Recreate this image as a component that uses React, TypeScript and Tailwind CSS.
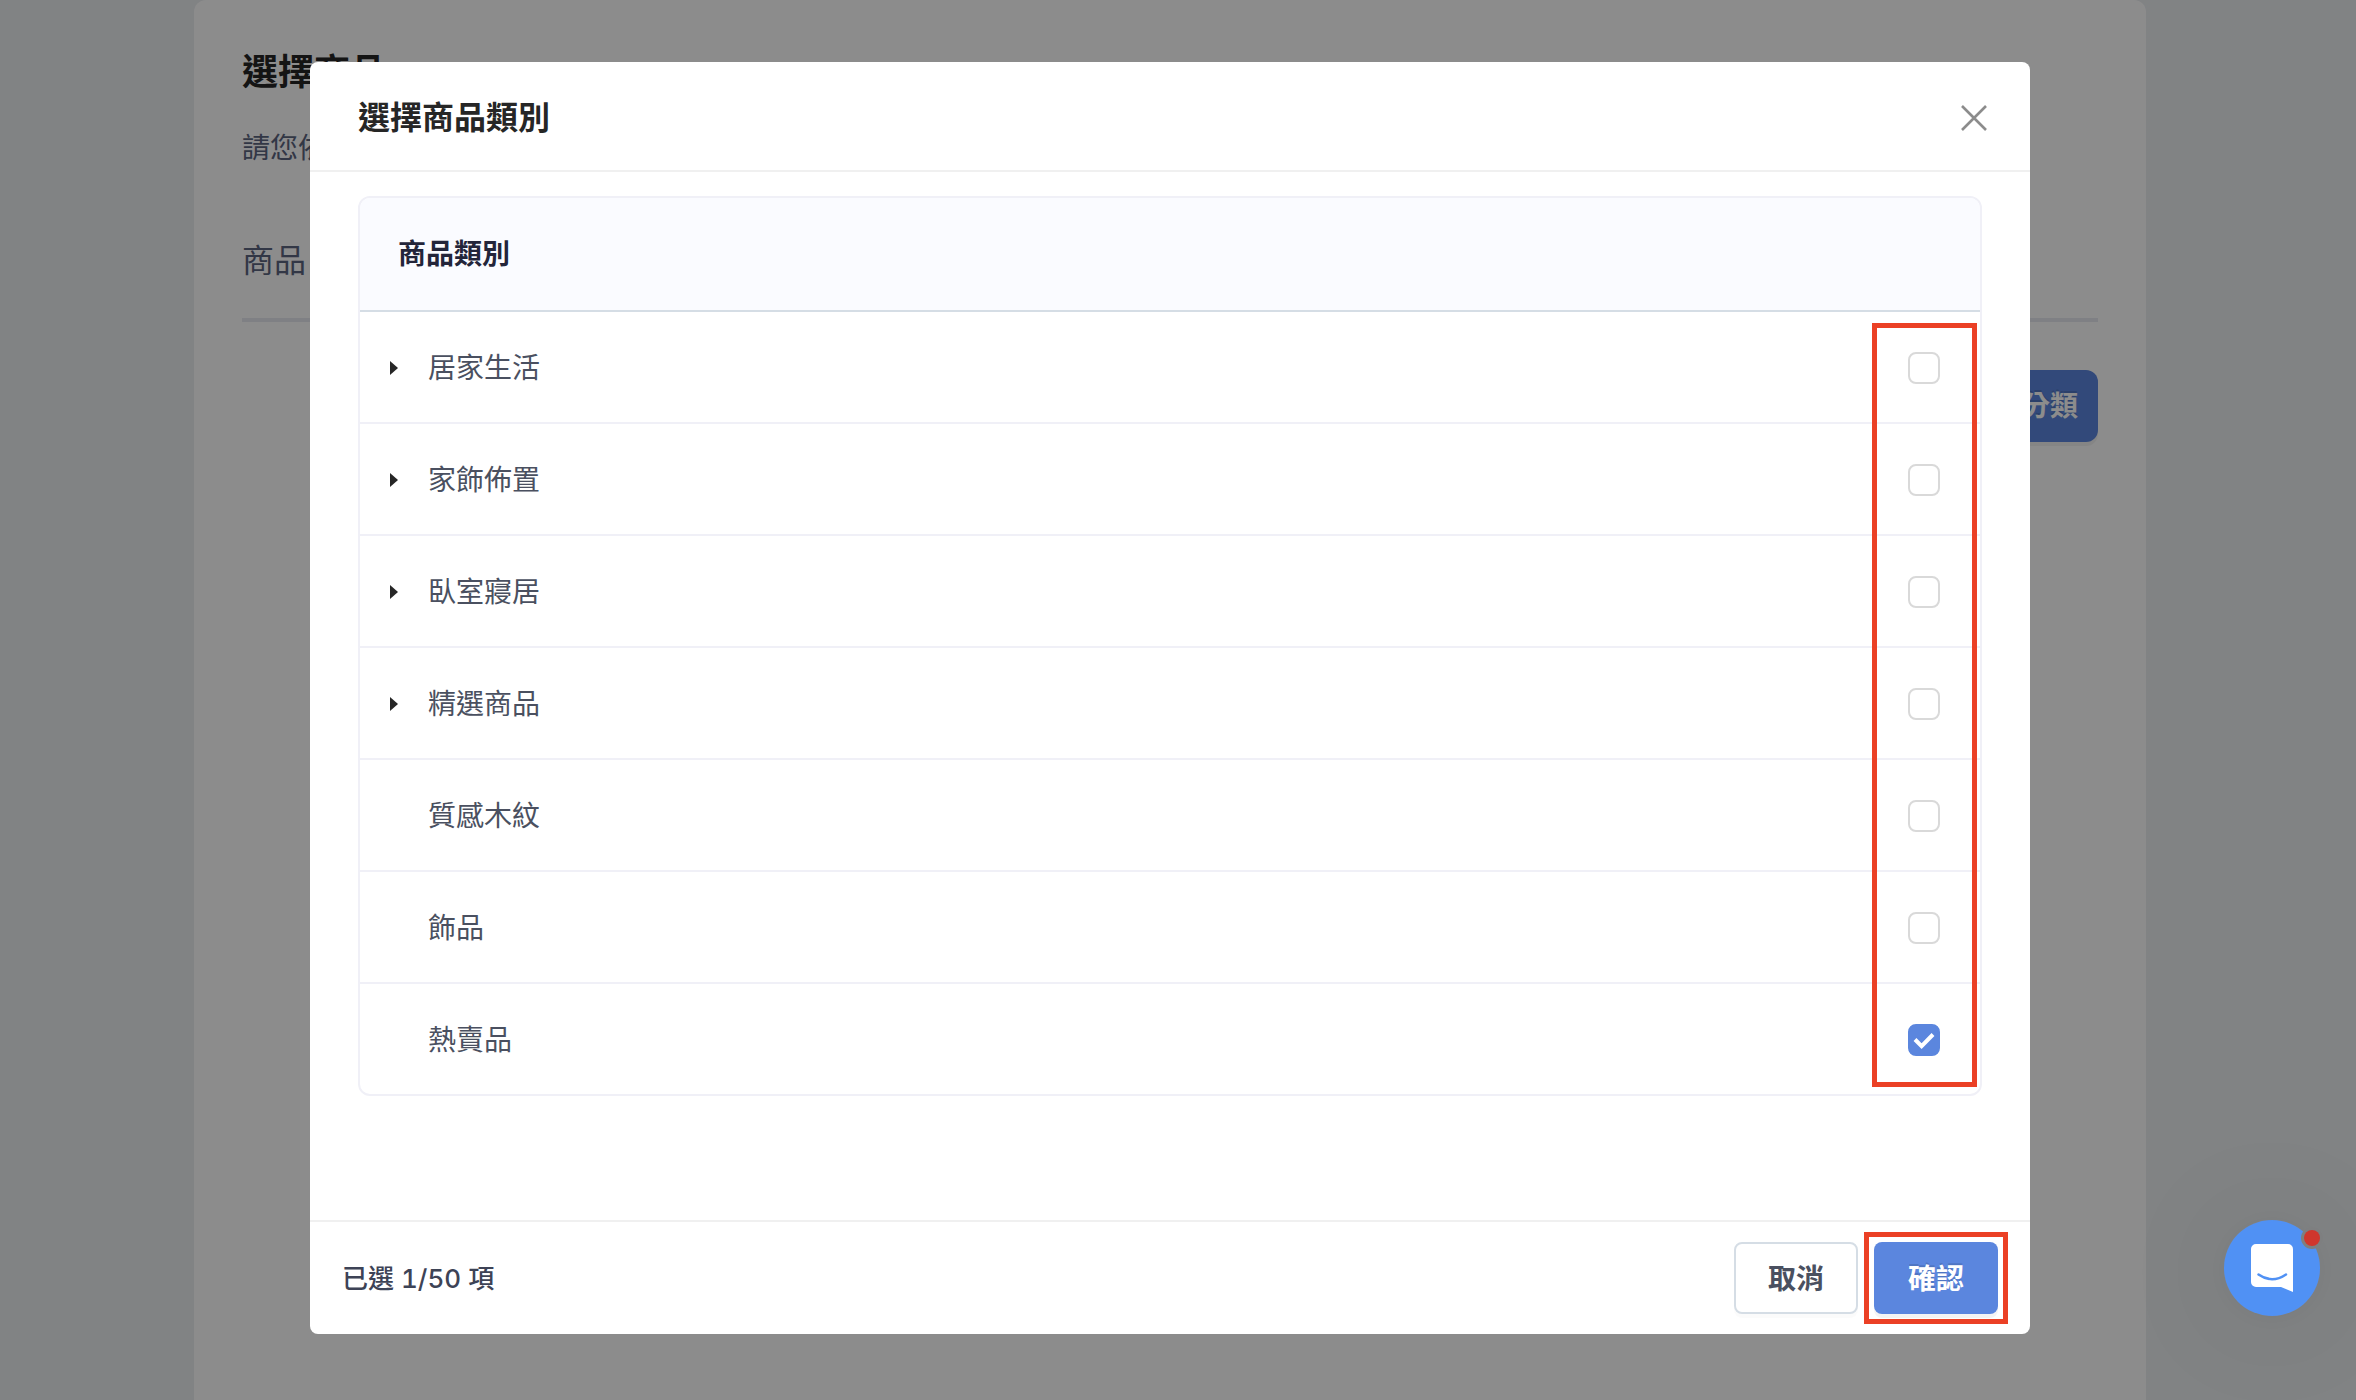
import { useState } from "react";

type Category = { id: string; name: string; expandable: boolean };

const CATEGORIES: Category[] = [
  { id: "living", name: "居家生活", expandable: true },
  { id: "decor", name: "家飾佈置", expandable: true },
  { id: "bedroom", name: "臥室寢居", expandable: true },
  { id: "featured", name: "精選商品", expandable: true },
  { id: "wood", name: "質感木紋", expandable: false },
  { id: "accessories", name: "飾品", expandable: false },
  { id: "hot", name: "熱賣品", expandable: false },
];

function PageBehind() {
  return (
    <div className="min-h-screen bg-[#eceef1] pr-[210px] pl-[194px]">
      <main className="min-h-screen rounded-t-xl bg-white px-12 pt-[46px]">
        <h1 className="text-[36px] leading-[52px] font-bold text-[#262626]">選擇商品</h1>
        <p className="mt-[30px] text-[28px] leading-10 text-[#5c6480]">請您依</p>
        <div className="mt-15 border-b-4 border-[#e8eaf0] pt-2.5 pb-[34px]">
          <h2 className="text-[32px] leading-[46px] text-[#5c6480]">商品</h2>
        </div>
        <div className="mt-12 flex justify-end">
          <button
            type="button"
            className="h-[72px] rounded-xl bg-[#5b86de] px-5 text-[28px] leading-10 font-bold text-white shadow-[0_4px_0_rgba(0,0,0,0.05)] [text-shadow:0_-2px_0_rgba(0,0,0,0.12)]"
          >
            分類
          </button>
        </div>
      </main>
    </div>
  );
}

function CategoryRow({
  category,
  checked,
  onToggle,
}: {
  category: Category;
  checked: boolean;
  onToggle: () => void;
}) {
  return (
    <tr className="group">
      <td className="h-28 border-b-2 border-[#f0f0f7] p-0 group-last:h-[110px] group-last:border-b-0">
        <div className="flex items-center pt-0.5 pl-6">
          <span className="flex w-11">
            {category.expandable && (
              <button type="button" aria-label={"展開" + category.name} className="px-1.5 py-2">
                <svg width="8" height="14" viewBox="0 0 8 14" fill="#262626" className="block">
                  <path d="M0 0L8 7L0 14Z" />
                </svg>
              </button>
            )}
          </span>
          <label htmlFor={category.id} className="text-[28px] leading-10 text-[#4a5060]">
            {category.name}
          </label>
        </div>
      </td>
      <td className="w-[120px] border-b-2 border-[#f0f0f7] p-0 pr-10 group-last:border-b-0">
        <div className="flex justify-end pt-0.5">
          <span className="relative flex size-8">
            <input
              id={category.id}
              type="checkbox"
              checked={checked}
              onChange={onToggle}
              className="size-8 appearance-none rounded-lg border-2 border-[#d9d9d9] bg-white checked:border-[#5b86de] checked:bg-[#5b86de]"
            />
            {checked && (
              <svg
                viewBox="0 0 32 32"
                fill="none"
                stroke="#fff"
                strokeWidth="4"
                className="pointer-events-none absolute inset-0 size-8"
              >
                <path d="M7 15.5L13.6 22.2L25 10.5" />
              </svg>
            )}
          </span>
        </div>
      </td>
    </tr>
  );
}

function CategoryDialog() {
  const [selected, setSelected] = useState<string[]>(["hot"]);
  const toggle = (id: string) =>
    setSelected((s) => (s.includes(id) ? s.filter((x) => x !== id) : [...s, id]));

  return (
    <div className="fixed inset-0 flex items-start justify-center overflow-auto bg-black/45 pt-[62px] pr-12 pl-8">
      <section
        role="dialog"
        aria-labelledby="dialog-title"
        className="w-full max-w-[1720px] rounded-lg bg-white"
      >
        <header className="flex items-center justify-between border-b-2 border-[#f0f0f0] pt-8 pr-10 pb-7 pl-12">
          <h2 id="dialog-title" className="text-[32px] leading-12 font-bold text-[#262626]">
            選擇商品類別
          </h2>
          <button type="button" aria-label="關閉" className="flex size-8 items-center justify-center">
            <svg width="28" height="28" viewBox="0 0 28 28" stroke="#8c8c8c" strokeWidth="2.6">
              <path d="M2 2L26 26M26 2L2 26" />
            </svg>
          </button>
        </header>

        <div className="px-12 pt-6 pb-31">
          <div className="relative">
            <div className="overflow-hidden rounded-xl border-2 border-[#f0f0f7]">
              <table className="w-full border-separate border-spacing-0">
                <thead>
                  <tr className="bg-[#fafbff]">
                    <th className="h-[114px] border-b-2 border-[#d5dde5] p-0 pl-[38px] text-left text-[28px] leading-10 font-bold text-[#23253a]">
                      商品類別
                    </th>
                    <th className="border-b-2 border-[#d5dde5] p-0" />
                  </tr>
                </thead>
                <tbody>
                  {CATEGORIES.map((c) => (
                    <CategoryRow
                      key={c.id}
                      category={c}
                      checked={selected.includes(c.id)}
                      onToggle={() => toggle(c.id)}
                    />
                  ))}
                </tbody>
              </table>
            </div>
            <div className="pointer-events-none absolute top-[127px] right-[5px] bottom-[9px] w-[105px] border-5 border-[#eb4025]" />
          </div>
        </div>

        <footer className="flex items-center justify-between border-t-2 border-[#f0f0f0] px-8 py-5">
          <p className="pt-0.5 text-[26px] leading-10 font-medium text-[#3d4356] tabular-nums">
            已選 {selected.length}/50 項
          </p>
          <div className="flex gap-4">
            <button
              type="button"
              className="h-[72px] w-31 rounded-lg border-2 border-[#d5dde5] bg-white pt-0.5 text-[28px] leading-10 font-bold text-[#4a5060] shadow-[0_4px_0_rgba(0,0,0,0.016)]"
            >
              取消
            </button>
            <div className="relative">
              <button
                type="button"
                className="h-[72px] w-31 rounded-lg bg-[#5b86de] pt-0.5 text-[28px] leading-10 font-bold text-white shadow-[0_4px_0_rgba(0,0,0,0.045)] [text-shadow:0_-2px_0_rgba(0,0,0,0.12)]"
              >
                確認
              </button>
              <div className="pointer-events-none absolute -inset-2.5 border-5 border-[#eb4025]" />
            </div>
          </div>
        </footer>
      </section>
    </div>
  );
}

function ChatLauncher() {
  return (
    <button
      type="button"
      aria-label="開啟聊天"
      className="fixed right-9 bottom-21 size-24 rounded-full shadow-[0_4px_140px_rgba(0,0,0,0.08),0_2px_24px_rgba(0,0,0,0.05)]"
    >
      <svg viewBox="0 0 96 96" className="block size-24 overflow-visible">
        <circle cx="48" cy="48" r="48" fill="#5091f4" />
        <path
          d="M32 24H64a5 5 0 0 1 5 5V72L57 67H32a5 5 0 0 1-5-5V29a5 5 0 0 1 5-5Z"
          fill="#fff"
        />
        <path
          d="M34.5 54.5Q48 64 62 54.5"
          fill="none"
          stroke="#5091f4"
          strokeWidth="2.5"
          strokeLinecap="round"
        />
        <circle cx="88" cy="18" r="11" fill="#7e7f80" />
        <circle cx="88" cy="18" r="8" fill="#d0362d" />
      </svg>
    </button>
  );
}

export default function App() {
  return (
    <div className="font-['Inter','Noto_Sans_CJK_TC',sans-serif]" lang="zh-Hant">
      <PageBehind />
      <CategoryDialog />
      <ChatLauncher />
    </div>
  );
}
